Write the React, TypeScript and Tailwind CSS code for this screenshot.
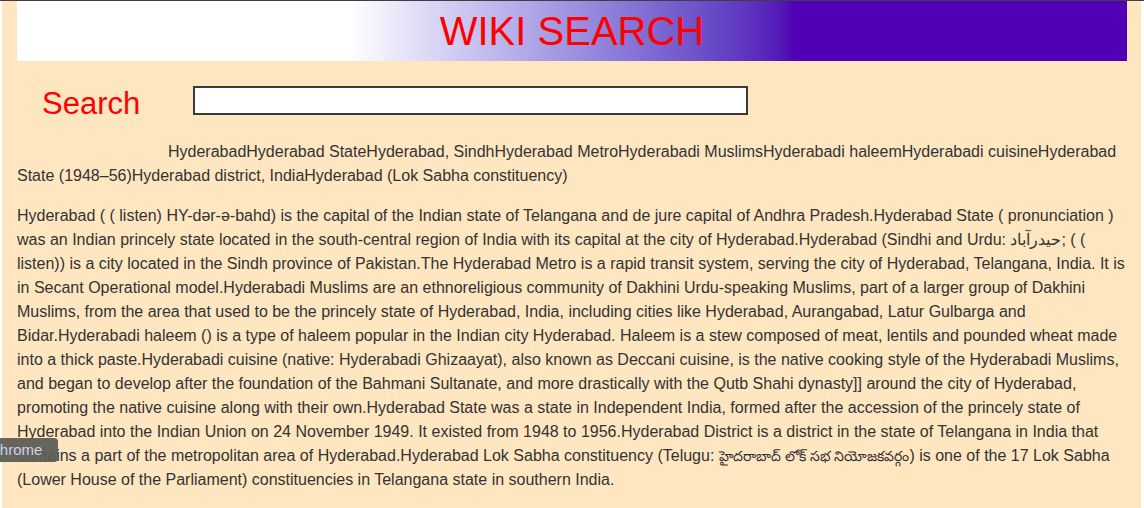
const TITLES =
  "HyderabadHyderabad StateHyderabad, SindhHyderabad MetroHyderabadi MuslimsHyderabadi haleemHyderabadi cuisineHyderabad State (1948–56)Hyderabad district, IndiaHyderabad (Lok Sabha constituency)";

const EXTRACT_START =
  "Hyderabad ( ( listen) HY-dər-ə-bahd) is the capital of the Indian state of Telangana and de jure capital of Andhra Pradesh.Hyderabad State ( pronunciation ) was an Indian princely state located in the south-central region of India with its capital at the city of Hyderabad.Hyderabad (Sindhi and Urdu: حیدرآباد; ( ( listen)) is a city located in the Sindh province of Pakistan.The Hyderabad Metro is a rapid transit system, serving the city of Hyderabad, Telangana, India. It is in Secant Operational model.Hyderabadi Muslims are an ethnoreligious community of Dakhini Urdu-speaking Muslims, part of a larger group of Dakhini Muslims, from the area that used to be the princely state of Hyderabad, India, including cities like Hyderabad, Aurangabad, Latur Gulbarga and Bidar.Hyderabadi haleem () is a type of haleem popular in the Indian city Hyderabad. Haleem is a stew composed of meat, lentils and pounded wheat made into a thick paste.Hyderabadi cuisine (native: Hyderabadi Ghizaayat), also known as Deccani cuisine, is the native cooking style of the Hyderabadi Muslims, and began to develop after the foundation of the Bahmani Sultanate, and more drastically with the Qutb Shahi dynasty]] around the city of Hyderabad, promoting the native cuisine along with their own.Hyderabad State was a state in Independent India, formed after the accession of the princely state of Hyderabad into the Indian Union on 24 November 1949. It existed from 1948 to 1956.Hyderabad District is a district in the state of Telangana in India that contains a part of the metropolitan area of Hyderabad.Hyderabad Lok Sabha constituency (Telugu: ";

const TELUGU = "హైదరాబాద్ లోక్ సభ నియోజకవర్గం";

const EXTRACT_END =
  ") is one of the 17 Lok Sabha (Lower House of the Parliament) constituencies in Telangana state in southern India.";

export default function App() {
  return (
    <div className="relative min-h-screen bg-white border-t border-[#3c4043] font-['Liberation_Sans',Arial,sans-serif]">
      <div className="ml-[2px] mr-[3px] min-h-[507px] bg-[#fee6c1] pl-[15px] pr-[14px]">
        {/* header */}
        <div className="h-[60px] flex items-center justify-center bg-linear-to-r from-white from-30% to-[#5000b5] to-70%">
          <h1 className="text-[40px] leading-none text-[#ff0000]">WIKI SEARCH</h1>
        </div>

        {/* search row */}
        <div className="flex items-center mt-[25px] h-[29px]">
          <label className="ml-[25px] w-[151px] text-[31px] leading-none text-[#ff0000] pt-[5px]">
            Search
          </label>
          <input
            type="text"
            className="w-[555px] h-[29px] bg-white border-2 border-[#3a3a3a] outline-none px-1 text-[15px]"
          />
        </div>

        {/* results */}
        <div className="mt-[25px] text-[16px] leading-[24px] text-[#333]">
          <p className="indent-[151px]">{TITLES}</p>
          <p className="mt-[16px]">
            {EXTRACT_START}
            <span className="text-[14px]">{TELUGU}</span>
            {EXTRACT_END}
          </p>
        </div>
      </div>

      {/* cut-off tooltip */}
      <div className="absolute left-[-14px] top-[437px] h-[24px] flex items-center pl-[3px] pr-[16px] rounded-r-[4px] bg-[#5e5e57]/95 text-[15px] text-[#ccd3e8]">
        Chrome
      </div>
    </div>
  );
}
